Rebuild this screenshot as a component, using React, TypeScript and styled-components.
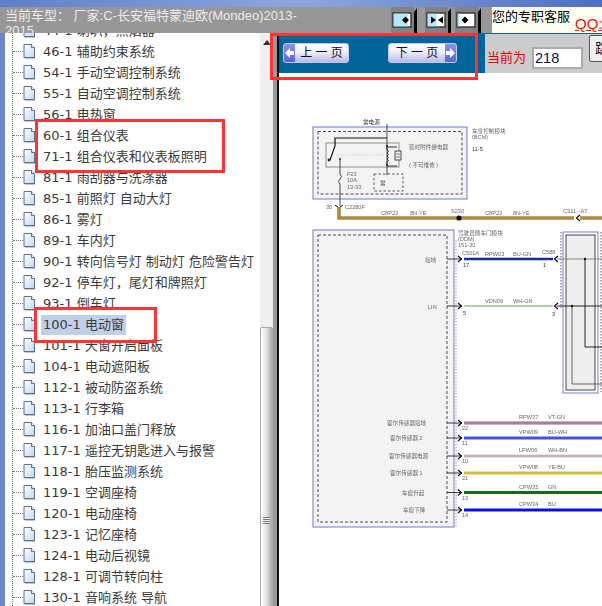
import React from 'react';
import styled, { createGlobalStyle } from 'styled-components';

const GlobalStyle = createGlobalStyle`
  html, body {
    margin: 0;
    padding: 0;
    background: #fff;
  }
`;

const CJK = `"Liberation Sans", "Noto Sans CJK SC", sans-serif`;
const RED = '#ff3333';

const Page = styled.div`
  position: relative;
  display: flex;
  flex-direction: column;
  width: 602px;
  height: 606px;
  overflow: hidden;
  background: #fff;
  font-family: ${CJK};
`;
const TopStrip = styled.div`
  height: 7px;
  flex: none;
  background: linear-gradient(90deg, #5f7fc9 0%, #8ea6de 50%, #4d6ec2 100%);
`;
const Header = styled.div`
  display: flex;
  flex: none;
  height: 26px;
  overflow: hidden;
  background: #979797;
`;
const Title = styled.div`
  flex: none;
  width: 296px;
  margin-right: 90px;
  padding-top: 1px;
  padding-left: 5px;
  font-size: 13px;
  line-height: 15px;
  color: #ececec;
`;
const ToolButton = styled.div<{ $after: number }>`
  flex: none;
  width: 26px;
  height: 26px;
  margin-right: ${p => p.$after}px;
`;
const Contact = styled.div`
  flex: none;
  display: flex;
  width: 110px;
  margin-left: 11px;
  white-space: nowrap;
  background: #fffff0;
  font-size: 13px;
  color: #000;
`;
const ContactText = styled.span`
  line-height: 18px;
  padding-top: 1px;
  margin-right: 5px;
`;
const QQ = styled.span`
  padding-top: 8px;
  font-size: 15px;
  line-height: 18px;
  color: #ee1111;
  text-decoration: underline;
`;
const Body = styled.div`
  display: flex;
  flex: 1;
  min-height: 0;
`;
const Sidebar = styled.div`
  display: flex;
  flex: none;
  width: 273px;
  border-left: 5px solid #6b84c4;
  box-sizing: border-box;
`;
const Tree = styled.div`
  flex: 1;
  min-width: 0;
  overflow: hidden;
  padding-left: 7px;
`;
const TreeList = styled.ul`
  list-style: none;
  margin: -13px 0 0;
  padding: 0;
  border-left: 1px dotted #777;
`;
const TreeRow = styled.li`
  display: flex;
  align-items: center;
  height: 21px;
  white-space: nowrap;
`;
const Connector = styled.span`
  flex: none;
  width: 10px;
  border-top: 1px dotted #777;
`;
const RowLabel = styled.span<{ $selected?: boolean }>`
  margin-left: 5px;
  padding: 0 2px;
  height: 20px;
  line-height: 20px;
  font-family: "DejaVu Sans", "Noto Sans CJK SC", sans-serif;
  font-size: 13px;
  color: #3a3a3a;
  background: ${p => (p.$selected ? '#c0d0ea' : 'transparent')};
`;
const Scrollbar = styled.div`
  display: flex;
  flex: none;
  flex-direction: column;
  align-items: stretch;
  width: 13px;
  overflow: hidden;
  background: #efefef;
`;
const ScrollArrow = styled.div`
  flex: none;
  width: 0;
  height: 0;
  margin: 7px 0 0 3px;
  border-left: 4px solid transparent;
  border-right: 4px solid transparent;
  border-bottom: 5px solid #333;
`;
const ScrollThumb = styled.div`
  display: flex;
  flex: none;
  height: 384px;
  align-items: center;
  justify-content: center;
  margin-top: 282px;
  border: 1px solid #aaa;
  border-radius: 2px 2px 0 0;
  background: linear-gradient(90deg, #fdfdfd 0%, #e8e8e8 45%, #a9a9a9 100%);
`;
const Grip = styled.div`
  width: 7px;
  height: 7px;
  background: repeating-linear-gradient(180deg, #777 0 1px, #eee 1px 2px);
`;
const Splitter = styled.div`
  flex: none;
  width: 6px;
  background: linear-gradient(90deg, #999 0 4px, #111 4px 6px);
`;
const Main = styled.div`
  display: flex;
  flex: 1;
  flex-direction: column;
  min-width: 0;
`;
const NavRow = styled.div`
  display: flex;
  flex: none;
  height: 40px;
  background: #006699;
`;
const NavButtons = styled.div`
  display: flex;
  flex: none;
  gap: 39px;
  align-items: center;
  width: 206px;
  padding: 0 0 0 4px;
  box-sizing: border-box;
`;
const PageButton = styled.button<{ $reverse?: boolean }>`
  display: flex;
  flex-direction: ${p => (p.$reverse ? 'row-reverse' : 'row')};
  align-items: stretch;
  width: ${p => (p.$reverse ? 69 : 66)}px;
  height: 20px;
  padding: 0;
  overflow: hidden;
  border: 1px solid #c6c9ee;
  border-radius: 3px;
  background: linear-gradient(180deg, #ffffff 0%, #eeeefc 45%, #b5b9e6 100%);
  font-family: ${CJK};
  font-size: 12px;
  color: #111;
`;
const ArrowCap = styled.span`
  flex: none;
  width: 11px;
  background: linear-gradient(180deg, #8c92ee, #5d62d8);
  display: flex;
  align-items: center;
  justify-content: center;
`;
const ButtonText = styled.span`
  flex: 1;
  line-height: 18px;
  text-align: center;
  white-space: nowrap;
`;
const JumpPanel = styled.div`
  display: flex;
  flex: 1;
  gap: 6px;
  align-items: flex-start;
  margin-top: 1px;
  padding-left: 2px;
  height: 39px;
  overflow: hidden;
  background: #cccccc;
`;
const JumpLabel = styled.span`
  margin-top: 16px;
  font-size: 13px;
  line-height: 16px;
  color: #ee0000;
  white-space: nowrap;
`;
const PageInput = styled.div`
  flex: none;
  width: 51px;
  height: 22px;
  margin-top: 13px;
  box-sizing: border-box;
  border: 2px solid #aaa;
  background: #fff;
  padding-left: 1px;
  font-size: 14.5px;
  line-height: 18px;
  color: #111144;
`;
const JumpButton = styled.div`
  flex: none;
  width: 40px;
  height: 27px;
  margin-top: 1px;
  box-sizing: border-box;
  padding-left: 5px;
  border: 1px solid #555;
  border-radius: 2px;
  background: #f0f0f0;
  font-size: 14px;
  line-height: 25px;
  color: #111;
`;
const Diagram = styled.svg`
  display: block;
  flex: none;
  width: 323px;
  height: 533px;
  filter: blur(0.55px);
  font-family: ${CJK};
`;
const Note = styled.div<{ $x: number; $y: number; $w: number; $h: number }>`
  position: absolute;
  left: ${p => p.$x}px;
  top: ${p => p.$y}px;
  width: ${p => p.$w}px;
  height: ${p => p.$h}px;
  box-sizing: border-box;
  border: 3px solid ${RED};
`;

const treeItems = [
  '44-1 喇叭，点烟器',
  '46-1 辅助约束系统',
  '54-1 手动空调控制系统',
  '55-1 自动空调控制系统',
  '56-1 电热窗',
  '60-1 组合仪表',
  '71-1 组合仪表和仪表板照明',
  '81-1 雨刮器与洗涤器',
  '85-1 前照灯 自动大灯',
  '86-1 雾灯',
  '89-1 车内灯',
  '90-1 转向信号灯 制动灯 危险警告灯',
  '92-1 停车灯，尾灯和牌照灯',
  '93-1 倒车灯',
  '100-1 电动窗',
  '101-1 天窗开启面板',
  '104-1 电动遮阳板',
  '112-1 被动防盗系统',
  '113-1 行李箱',
  '116-1 加油口盖门释放',
  '117-1 遥控无钥匙进入与报警',
  '118-1 胎压监测系统',
  '119-1 空调座椅',
  '120-1 电动座椅',
  '123-1 记忆座椅',
  '124-1 电动后视镜',
  '128-1 可调节转向柱',
  '130-1 音响系统 导航',
];

const FileIcon = () => (
  <svg width="13" height="15" viewBox="0 0 13 15" style={{ flex: 'none' }}>
    <defs>
      <linearGradient id="sheet" x1="0" y1="0" x2="1" y2="1">
        <stop offset="0" stopColor="#ffffff" />
        <stop offset="1" stopColor="#bcd8f8" />
      </linearGradient>
    </defs>
    <path d="M2 2.5h7l3 3v9H2z" fill="#8a8a8a" />
    <path d="M1 .5h7.5l3 3V13.5H1z" fill="url(#sheet)" stroke="#5f6f88" />
    <path d="M8.5 .5v3h3" fill="#fff" stroke="#5f6f88" />
  </svg>
);

// arrow cell of the frame buttons: split is where the blue part stops
const FrameIcon = ({ split, arrows }: { split: number; arrows: string[] }) => (
  <svg width="26" height="26" viewBox="0 0 26 26">
    <rect width="23" height="26" fill="#828282" />
    <path d="M23 5l3-4v25h-3z" fill="#050505" />
    <rect x="2" y="6" width="18" height="14" fill="#fff" stroke="#333" strokeWidth="1.4" />
    <rect x="2.7" y="6.7" width={split} height="12.6" fill="#b4e6fb" />
    {arrows.map(d => (
      <path key={d} d={d} fill="#000" />
    ))}
  </svg>
);

const Chevron = ({ left }: { left?: boolean }) => (
  <svg width="9" height="10" viewBox="0 0 9 10">
    <path d={left ? 'M0 5l5-5v3h4v4H5v3z' : 'M9 5L4 0v3H0v4h4v3z'} fill="#fff" />
  </svg>
);

type Wire = {
  y: number;
  color: string;
  edge: string;
  pin: string;
  circuit: string;
  code: string;
  label: string;
  labelX: number;
};

const wires: Wire[] = [
  { y: 423, color: '#a4809c', edge: '#8a6a88', pin: '22', circuit: 'RPW37', code: 'VT-GN', label: '霍尔传感器接地', labelX: 387 },
  { y: 438, color: '#4a50e6', edge: '#4a50e6', pin: '11', circuit: 'VPW09', code: 'BU-WH', label: '霍尔传感器 2', labelX: 390 },
  { y: 456, color: '#c8b0b0', edge: '#d0d0d0', pin: '10', circuit: 'LPW06', code: 'WH-BN', label: '霍尔传感器电源', labelX: 389 },
  { y: 473, color: '#cbc335', edge: '#cbc335', pin: '21', circuit: 'VPW08', code: 'YE-BU', label: '霍尔传感器 1', labelX: 390 },
  { y: 492.5, color: '#107010', edge: '#107010', pin: '13', circuit: 'CPW35', code: 'GN', label: '车窗升起', labelX: 402 },
  { y: 510, color: '#0a10e0', edge: '#0a10e0', pin: '14', circuit: 'CPW34', code: 'BU', label: '车窗下降', labelX: 403 },
];

const Label = ({ x, y, children, size = 5.6, fill = '#666' }: {
  x: number; y: number; children: React.ReactNode; size?: number; fill?: string;
}) => (
  <text x={x} y={y} fontSize={size} fill={fill}>{children}</text>
);

const Pin = ({ x, y }: { x: number; y: number }) => (
  <>
    <path d={`M447 ${y}H${x + 3}`} stroke="#222" strokeWidth="0.9" fill="none" />
    <path d={`M${x - 1} ${y - 3}l3.5 3l-3.5 3`} stroke="#000" strokeWidth="1.1" fill="none" />
  </>
);

const PinLeft = ({ x, y }: { x: number; y: number }) => (
  <path d={`M${x + 3} ${y - 3}l-3.5 3l3.5 3`} stroke="#000" strokeWidth="1.1" fill="none" />
);

const WiringDiagram = () => (
  <Diagram viewBox="279 73 323 533">
    {/* BCM */}
    <rect x="313" y="127" width="154" height="72" fill="#f3f3f3" stroke="#7474d8" strokeWidth="1" />
    <rect x="318" y="131.5" width="144" height="62.5" fill="none" stroke="#222" strokeWidth="0.8" strokeDasharray="3 2" />
    <rect x="326" y="143" width="73" height="24" fill="none" stroke="#777" strokeWidth="0.8" />
    <Label x={363} y={124} fill="#333">常电源</Label>
    <path d="M387 124V175" stroke="#333" strokeWidth="0.9" fill="none" />
    <path d="M387 138H335V146L330 160" stroke="#111" strokeWidth="1.2" fill="none" />
    <path d="M337 155H385" stroke="#bbb" strokeWidth="0.7" strokeDasharray="1.5 1.5" />
    <path d="M387 147v3q3 1 0 3q3 1 0 3q3 1 0 3q3 1 0 3v3M387 147H397M387 166H397" stroke="#222" strokeWidth="0.9" fill="none" />
    <rect x="395" y="151" width="6" height="9" fill="#f3f3f3" stroke="#222" strokeWidth="0.8" />
    <path d="M396 154h4M396 157h4" stroke="#222" strokeWidth="0.6" />
    <circle cx="387" cy="146" r="1" fill="#222" />
    <circle cx="387" cy="165" r="1" fill="#222" />
    <circle cx="329" cy="160" r="1.4" fill="#222" />
    <circle cx="340" cy="159" r="1.2" fill="#666" />
    <path d="M340 159V174q3 2.5 0 5q-3 2.5 0 5V206" stroke="#333" strokeWidth="0.9" fill="none" />
    <rect x="374" y="174" width="29" height="17" fill="none" stroke="#333" strokeWidth="0.8" strokeDasharray="2.5 2" />
    <Label x={380} y={185} fill="#444">常</Label>
    <Label x={409} y={149}>延时附件继电器</Label>
    <Label x={409} y={167}>( 不可维修 )</Label>
    <Label x={347} y={176}>F23</Label>
    <Label x={347} y={182}>10A</Label>
    <Label x={347} y={189}>13-33</Label>
    <Label x={472} y={133}>车身控制模块</Label>
    <Label x={472} y={139}>(BCM)</Label>
    <Label x={472} y={151} fill="#333">11-5</Label>

    {/* supply wire */}
    <Label x={326} y={209}>30</Label>
    <Label x={345} y={209}>C2280F</Label>
    <path d="M335 205l4 3l4-3" stroke="#000" strokeWidth="1" fill="none" />
    <path d="M339 207V218H602" stroke="#6a4a12" strokeWidth="3" fill="none" />
    <path d="M339 207V218H602" stroke="#d4a02c" strokeWidth="1.4" fill="none" />
    <circle cx="459" cy="218" r="2.6" fill="#111" />
    <rect x="574" y="214" width="6" height="8" fill="#fff" />
    <PinLeft x={577} y={218} />
    <Label x={381} y={215}>C8P23</Label>
    <Label x={410} y={215}>8N-YE</Label>
    <Label x={451} y={213}>S230</Label>
    <Label x={485} y={215}>C8P23</Label>
    <Label x={513} y={215}>8N-YE</Label>
    <Label x={563} y={213}>C311 - A7</Label>

    {/* DDM */}
    <rect x="313" y="230" width="141" height="297" fill="#f3f3f3" stroke="#7474d8" strokeWidth="1" />
    <rect x="318" y="235" width="129" height="287" fill="none" stroke="#222" strokeWidth="0.8" strokeDasharray="3 2" />
    <path d="M456 240V527" stroke="#888" strokeWidth="0.8" strokeDasharray="1.5 1.5" />
    <Label x={458} y={235}>驾驶员侧车门模块</Label>
    <Label x={458} y={241}>(DDM)</Label>
    <Label x={458} y={247}>151-30</Label>
    <Label x={425} y={262}>接地</Label>
    <Label x={428} y={309}>LIN</Label>

    <Pin x={459} y={259} />
    <path d="M464 259H553" stroke="#1b2b98" strokeWidth="2.6" />
    <PinLeft x={555} y={259} />
    <Label x={462} y={255}>C501A</Label>
    <Label x={485} y={256}>RPW03</Label>
    <Label x={513} y={256}>BU-GN</Label>
    <Label x={542} y={254}>C588</Label>
    <Label x={463} y={267} fill="#333">17</Label>
    <Label x={543} y={267} fill="#333">1</Label>

    <Pin x={459} y={306} />
    <path d="M464 306H553" stroke="#5aa85a" strokeWidth="1.2" />
    <PinLeft x={555} y={306} />
    <Label x={485} y={303}>VDN09</Label>
    <Label x={513} y={303}>WH-GN</Label>
    <Label x={463} y={315} fill="#333">5</Label>
    <Label x={552} y={316} fill="#333">3</Label>

    {wires.map(w => (
      <g key={w.pin}>
        <Pin x={459} y={w.y} />
        <path d={`M464 ${w.y}H602`} stroke={w.edge} strokeWidth="2.8" />
        <path d={`M464 ${w.y}H602`} stroke={w.color} strokeWidth="1.8" />
        <Label x={w.labelX} y={w.y + 2}>{w.label}</Label>
        <Label x={462} y={w.y + 7}>{w.pin}</Label>
        <Label x={519} y={w.y - 4}>{w.circuit}</Label>
        <Label x={548} y={w.y - 4}>{w.code}</Label>
      </g>
    ))}

    {/* right module */}
    <rect x="563" y="232" width="35" height="161" fill="#fff" stroke="#6a6ad8" strokeWidth="0.9" />
    <rect x="566" y="235" width="29" height="155" fill="#eeeeee" stroke="#333" strokeWidth="0.9" />
    <path d="M561 232V308M601 232V392" stroke="#333" strokeWidth="0.8" strokeDasharray="1.5 1.5" />
    <path d="M557 259H602" stroke="#888" strokeWidth="1.1" />
    <path d="M557 306H602" stroke="#222" strokeWidth="1" />
    <path d="M585 259V347H602" stroke="#111" strokeWidth="0.9" fill="none" />
    <path d="M572 306V384H602" stroke="#555" strokeWidth="0.9" fill="none" />
    <circle cx="585" cy="259" r="1.2" fill="#111" />
    <circle cx="572" cy="306" r="1.2" fill="#111" />
  </Diagram>
);

const App = () => (
  <Page>
    <GlobalStyle />
    <TopStrip />
    <Header>
      <Title>当前车型： 厂家:C-长安福特蒙迪欧(Mondeo)2013-2015</Title>
      <ToolButton $after={8}>
        <FrameIcon split={14} arrows={['M11 13l3.5-3.5v7zM14.5 9.5l3.5 3.5l-3.5 3.5z']} />
      </ToolButton>
      <ToolButton $after={4}>
        <FrameIcon split={9} arrows={['M6 9.5l5 3.5l-5 3.5zM13 13l5-3.5v7z']} />
      </ToolButton>
      <ToolButton $after={0}>
        <FrameIcon split={2} arrows={['M6.5 13l3.5-3.5v7zM10 9.5l3.5 3.5l-3.5 3.5z']} />
      </ToolButton>
      <Contact>
        <ContactText>您的专职客服</ContactText>
        <QQ>QQ:1</QQ>
      </Contact>
    </Header>
    <Body>
      <Sidebar>
        <Tree>
          <TreeList>
            {treeItems.map(item => (
              <TreeRow key={item}>
                <Connector />
                <FileIcon />
                <RowLabel $selected={item.startsWith('100-1')}>{item}</RowLabel>
              </TreeRow>
            ))}
          </TreeList>
        </Tree>
        <Scrollbar>
          <ScrollArrow />
          <ScrollThumb>
            <Grip />
          </ScrollThumb>
        </Scrollbar>
      </Sidebar>
      <Splitter />
      <Main>
        <NavRow>
          <NavButtons>
            <PageButton>
              <ArrowCap><Chevron left /></ArrowCap>
              <ButtonText>上 一 页</ButtonText>
            </PageButton>
            <PageButton $reverse>
              <ArrowCap><Chevron /></ArrowCap>
              <ButtonText>下 一 页</ButtonText>
            </PageButton>
          </NavButtons>
          <JumpPanel>
            <JumpLabel>当前为</JumpLabel>
            <PageInput>218</PageInput>
            <JumpButton>跳转</JumpButton>
          </JumpPanel>
        </NavRow>
        <WiringDiagram />
      </Main>
    </Body>
    <Note $x={35} $y={119} $w={190} $h={54} />
    <Note $x={270} $y={33} $w={208} $h={47} />
    <Note $x={34} $y={307} $w={123} $h={36} />
  </Page>
);

export default App;
